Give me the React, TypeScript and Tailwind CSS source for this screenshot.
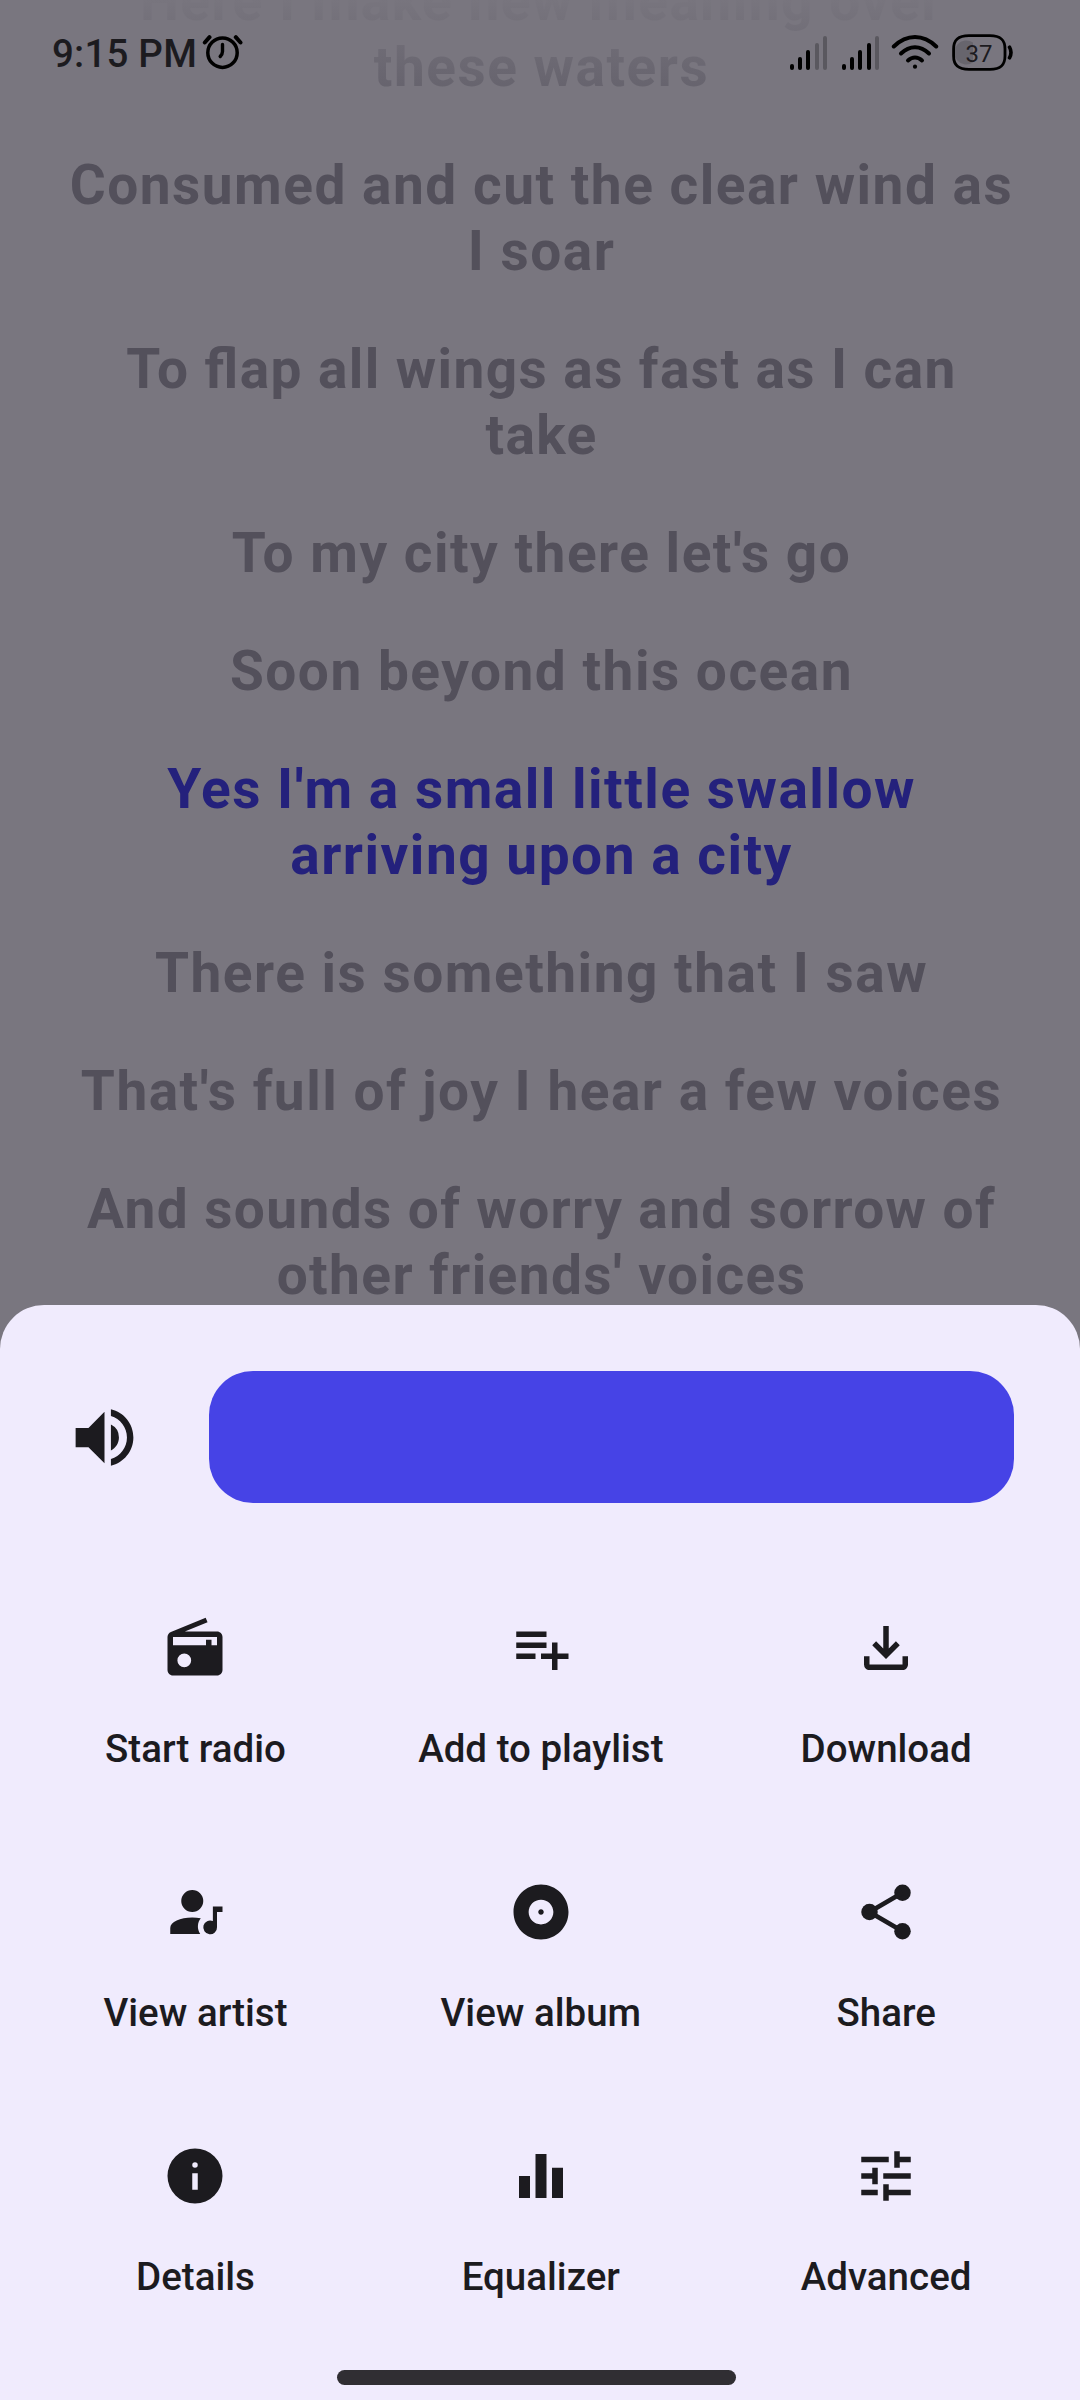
import React from "react";

type LyricLine = { rows: string[]; active?: boolean; tight?: boolean };

const lyrics: LyricLine[] = [
  { rows: ["Here I make new meaning over", "these waters"] },
  { rows: ["Consumed and cut the clear wind as", "I soar"] },
  { rows: ["To flap all wings as fast as I can", "take"], tight: true },
  { rows: ["To my city there let's go"] },
  { rows: ["Soon beyond this ocean"] },
  { rows: ["Yes I'm a small little swallow", "arriving upon a city"], active: true },
  { rows: ["There is something that I saw"] },
  { rows: ["That's full of joy I hear a few voices"] },
  { rows: ["And sounds of worry and sorrow of", "other friends' voices"], tight: true },
];

const actions: { label: string; icon: React.ReactNode }[] = [
  {
    label: "Start radio",
    icon: (
      <path d="M3.24 6.15C2.51 6.43 2 7.17 2 8v12c0 1.1.89 2 2 2h16c1.11 0 2-.9 2-2V8c0-1.11-.89-2-2-2H8.3l8.26-3.34L15.88 1 3.24 6.15zM8.1 19a2.5 2.5 0 1 1 0-5 2.5 2.5 0 0 1 0 5zM20 11h-2V9h-2v2H4V8h16v3z" />
    ),
  },
  {
    label: "Add to playlist",
    icon: <path d="M14 10H3v2h11v-2zm0-4H3v2h11V6zm4 8v-4h-2v4h-4v2h4v4h2v-4h4v-2h-4zM3 16h7v-2H3v2z" />,
  },
  {
    label: "Download",
    icon: (
      <path d="M12 16 7 11l1.4-1.45 2.6 2.6V4h2v8.15l2.6-2.6L17 11l-5 5zM6 20c-.55 0-1.02-.2-1.41-.59A1.93 1.93 0 0 1 4 18v-3h2v3h12v-3h2v3c0 .55-.2 1.02-.59 1.41-.39.39-.86.59-1.41.59H6z" />
    ),
  },
  {
    label: "View artist",
    icon: (
      <path d="M11 4a4 4 0 1 0 0 8 4 4 0 0 0 0-8zM3 20v-2.2c0-2.2 3.6-3.8 8-3.8 1.1 0 2.1.1 3.1.3-1.3 1.6-1.4 3.9-.2 5.7H3zM22 10h-3.5v5.3a2.5 2.5 0 1 0 1.5 2.2V12h2v-2z" />
    ),
  },
  {
    label: "View album",
    icon: (
      <path d="M12 2C6.48 2 2 6.48 2 12s4.48 10 10 10 10-4.48 10-10S17.52 2 12 2zm0 14.5c-2.49 0-4.5-2.01-4.5-4.5S9.51 7.5 12 7.5s4.5 2.01 4.5 4.5-2.01 4.5-4.5 4.5zm0-5.5c-.55 0-1 .45-1 1s.45 1 1 1 1-.45 1-1-.45-1-1-1z" />
    ),
  },
  {
    label: "Share",
    icon: (
      <>
        <circle cx="18" cy="5" r="3" />
        <circle cx="6" cy="12" r="3" />
        <circle cx="18" cy="19" r="3" />
        <path d="M18 5 6 12l12 7" fill="none" stroke="currentColor" strokeWidth="1.7" />
      </>
    ),
  },
  {
    label: "Details",
    icon: (
      <path
        fillRule="evenodd"
        d="M12 2a10 10 0 1 0 0 20 10 10 0 0 0 0-20zM11 11h2v6h-2v-6zM12 7a1 1 0 1 1 0 2 1 1 0 0 1 0-2z"
      />
    ),
  },
  {
    label: "Equalizer",
    icon: <path d="M10 20h4V4h-4v16zm-6 0h4v-8H4v8zM16 9v11h4V9h-4z" />,
  },
  {
    label: "Advanced",
    icon: (
      <path d="M3 17v2h6v-2H3zM3 5v2h10V5H3zm10 16v-2h8v-2h-8v-2h-2v6h2zM7 9v2H3v2h4v2h2V9H7zm14 4v-2H11v2h10zm-6-4h2V7h4V5h-4V3h-2v6z" />
    ),
  },
];

function Signal({ level }: { level: number }) {
  const heights = [6, 12.5, 20, 27, 34];
  return (
    <div className="flex h-[35px] items-end gap-[4.3px]">
      {heights.map((h, i) => (
        <span
          key={i}
          className={i < level ? "w-1 rounded-full bg-black" : "w-1 rounded-full bg-black/25"}
          style={{ height: h }}
        />
      ))}
    </div>
  );
}

function StatusBar() {
  return (
    <div className="absolute inset-x-0 top-0 flex h-[104px] items-center">
      <span className="ml-[52px] w-[147px] whitespace-nowrap pt-[3px] text-[38.5px] font-medium leading-[46px] tracking-[0.2px] text-[#1c1b1f]">
        9:15 PM
      </span>
      <svg className="ml-[3px] h-[36px] w-[42px] shrink-0" viewBox="0 0 42 36" fill="none" stroke="#000" strokeLinecap="round">
        <circle cx="20.5" cy="18.7" r="14.7" strokeWidth="3.5" />
        <path d="M2.8 8.5 7.5 3.2M38.5 8.5 33.8 3.2" strokeWidth="4" />
        <path d="M20.5 10.500v7q0 2.500-2.300 5" strokeWidth="3.4" />
      </svg>
      <div className="ml-auto mr-[67px] flex items-center">
        <Signal level={3} />
        <div className="w-[15px]" />
        <Signal level={4} />
        <svg className="ml-[11.5px] mr-[0.5px] h-[36px] w-[48px]" viewBox="0 0 48 36" fill="none" stroke="#000" strokeWidth="4" strokeLinecap="round">
          <path d="M2.8 12.5Q12.5 3 24 3t21.2 9.5" />
          <path d="M10 19.5Q16.5 13.200 24 13.200t14 6.300" />
          <path d="M17 26.500q3.200-3 7-3t7 3" />
          <circle cx="24" cy="32.7" r="2.1" fill="#000" stroke="none" />
        </svg>
        <div className="relative ml-[13px] h-[37px] w-[61px]">
          <svg className="h-full w-full" viewBox="0 0 61 37" fill="none">
            <path d="M21 8.5A12 12 0 1 0 21 28.5Z" fill="#000" fillOpacity="0.14" />
            <path
              d="M17 1.6H38C49 1.6 53 6 53 15v7c0 9-4 13.400-15 13.400H17C6 35.400 1.600 31 1.600 22v-7C1.600 6 6 1.600 17 1.600Z"
              stroke="#000"
              strokeWidth="2.8"
            />
            <path d="M57.5 13.200q3 5.300 0 10.600" stroke="#000" strokeWidth="3.6" strokeLinecap="round" />
          </svg>
          <span className="absolute left-[13.5px] top-[8px] text-[24px] leading-[24px] text-[#1c1b1f]">37</span>
        </div>
      </div>
    </div>
  );
}

export default function App() {
  return (
    <div className="relative flex h-[2400px] w-[1080px] flex-col overflow-hidden bg-[#79767f] font-['Roboto',sans-serif]">
      <div className="-mt-[32px] flex h-[1337px] shrink-0 flex-col gap-[52px] pl-[3px] text-center text-[55px] font-bold leading-[66px] [font-feature-settings:'liga'_1]">
        {lyrics.map((line, i) => (
          <div
            key={i}
            className={
              i === 0
                ? "bg-[linear-gradient(180deg,#79767f_20%,#5c5964_130%)] bg-clip-text tracking-[1.5px] text-transparent"
                : line.active
                  ? "tracking-[1.5px] text-[#24217c]"
                  : line.tight
                    ? "tracking-[1.4px] text-[#53505b]"
                    : "tracking-[1.5px] text-[#53505b]"
            }
          >
            {line.rows.map((row) => (
              <p key={row} className="whitespace-nowrap">
                {row}
              </p>
            ))}
          </div>
        ))}
      </div>
      <StatusBar />
      <div className="relative flex flex-1 flex-col rounded-t-[44px] bg-[#f0ebfd] text-[#1c1b1f]">
        <div className="mt-[66px] flex items-center gap-[66px] px-[66px]">
          <svg className="h-[77px] w-[77px] shrink-0" viewBox="0 0 24 24" fill="currentColor">
            <path d="M3 9v6h4l5 5V4L7 9H3zm13.5 3A4.5 4.5 0 0 0 14 7.97v8.05c1.48-.73 2.5-2.25 2.5-4.02zM14 3.23v2.06c2.89.86 5 3.54 5 6.71s-2.11 5.85-5 6.71v2.06c4.01-.91 7-4.49 7-8.77s-2.99-7.86-7-8.77z" />
          </svg>
          <div className="h-[132px] flex-1 rounded-[44px] bg-[#4643e6]" />
        </div>
        <div className="mt-[66px] grid grid-cols-3 pl-[22.8px] pr-[21.2px]">
          {actions.map((action) => (
            <button key={action.label} className="flex h-[264px] flex-col items-center pt-[46px]">
              <svg className="h-[66px] w-[66px]" viewBox="0 0 24 24" fill="currentColor">
                {action.icon}
              </svg>
              <span className="mt-[40px] text-[38.5px] font-medium leading-[55px]">{action.label}</span>
            </button>
          ))}
        </div>
        <div className="absolute bottom-[15px] left-[337px] h-[15.5px] w-[399px] rounded-full bg-[#302e33]" />
      </div>
    </div>
  );
}
